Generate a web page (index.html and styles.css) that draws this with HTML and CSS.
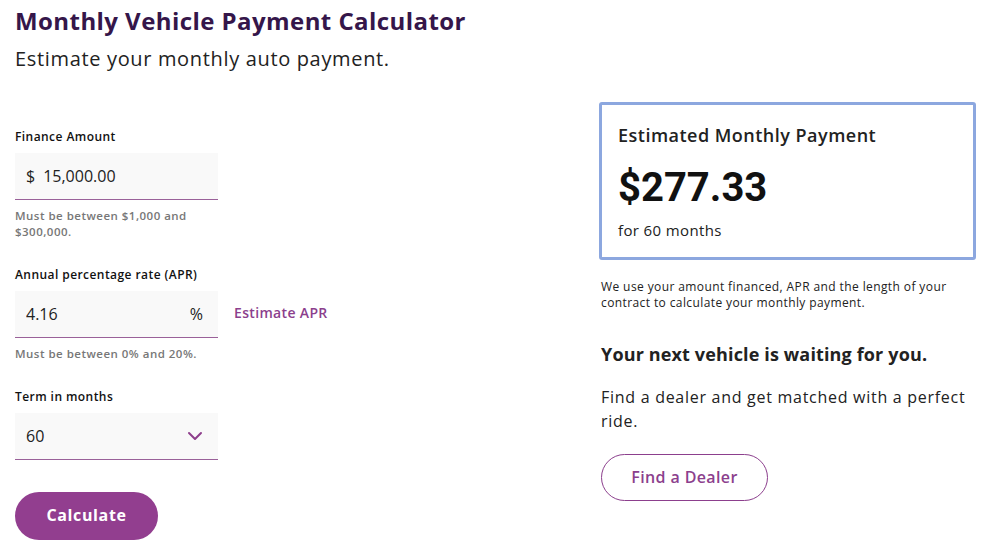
FILE: index.html
```html
<!DOCTYPE html>
<html lang="en">

<head>
    <meta charset="UTF-8">
    <meta name="viewport" content="width=device-width, initial-scale=1.0">
    <title>Monthly Vehicle Payment Calculator</title>
    <link rel="stylesheet" href="styles.css">
</head>

<body>
    <header class="intro">
        <h1 class="title">Monthly Vehicle Payment Calculator</h1>
        <p class="subtitle">Estimate your monthly auto payment.</p>
    </header>

    <div class="columns">
        <form class="calc-form">
            <div class="field">
                <label class="field-label" for="amount">Finance Amount</label>
                <div class="box">
                    <span class="prefix">$</span>
                    <input class="box-input" id="amount" type="text" value="15,000.00">
                </div>
                <p class="hint">Must be between $1,000 and $300,000.</p>
            </div>

            <div class="field">
                <label class="field-label" for="apr">Annual percentage rate (APR)</label>
                <div class="field-row">
                    <div class="box">
                        <input class="box-input" id="apr" type="text" value="4.16">
                        <span class="suffix">%</span>
                    </div>
                    <a class="link" href="#">Estimate APR</a>
                </div>
                <p class="hint">Must be between 0% and 20%.</p>
            </div>

            <div class="field">
                <label class="field-label" for="term">Term in months</label>
                <div class="box">
                    <span class="box-value" id="term">60</span>
                    <svg class="chevron" width="16" height="10" viewBox="0 0 16 10">
                        <path d="M2 2 L8 8 L14 2" fill="none" stroke="#8e3f8c" stroke-width="2" stroke-linecap="round" stroke-linejoin="round" />
                    </svg>
                </div>
            </div>

            <button class="btn-primary" type="button">Calculate</button>
        </form>

        <aside class="result">
            <div class="result-card">
                <h2 class="result-title">Estimated Monthly Payment</h2>
                <div class="result-amount">$277.33</div>
                <div class="result-term">for 60 months</div>
            </div>
            <p class="result-note">We use your amount financed, APR and the length of your contract to calculate your monthly payment.</p>

            <h3 class="promo-title">Your next vehicle is waiting for you.</h3>
            <p class="promo-text">Find a dealer and get matched with a perfect ride.</p>
            <button class="btn-outline" type="button">Find a Dealer</button>
        </aside>
    </div>
</body>

</html>
```

FILE: styles.css
```css
body {
    margin: 0;
    padding: 0 18px 0 15px;
    font-family: 'Open Sans', sans-serif;
    color: #222;
    background: #fff;
}

.intro {
    padding-top: 5px;
}

.title {
    margin: 0;
    font-size: 24px;
    line-height: 32px;
    font-weight: 700;
    letter-spacing: 0.018em;
    color: #35164a;
}

.subtitle {
    margin: 8px 0 0;
    font-size: 20px;
    line-height: 28px;
    letter-spacing: 0.033em;
    color: #222;
}

.columns {
    display: grid;
    grid-template-columns: 584px 377px;
    margin-top: 29px;
}

.calc-form {
    padding-top: 27px;
}

.field {
    margin-bottom: 27px;
}

.field-label {
    display: block;
    font-size: 12px;
    line-height: 16px;
    font-weight: 600;
    letter-spacing: 0.036em;
    color: #111;
    margin-bottom: 8px;
}

.field-row {
    display: flex;
    align-items: center;
    gap: 16px;
}

.box {
    display: flex;
    align-items: center;
    width: 203px;
    height: 47px;
    padding: 0 15px 0 11px;
    box-sizing: border-box;
    background: #f9f9f9;
    border-bottom: 1px solid #9a6199;
}

.prefix {
    font-size: 16px;
    margin-right: 8px;
}

.box-input,
.box-value {
    flex: 1;
    min-width: 0;
    border: none;
    background: transparent;
    font-family: inherit;
    font-size: 16px;
    color: #222;
    padding: 0;
    outline: none;
}

.suffix {
    font-size: 16px;
}

.chevron {
    flex: none;
}

.link {
    margin-top: -5px;
    font-size: 14px;
    font-weight: 600;
    letter-spacing: 0.024em;
    color: #8c3f8d;
    text-decoration: none;
}

.hint {
    margin: 8px 0 0;
    width: 203px;
    font-size: 11.5px;
    line-height: 16px;
    font-weight: 600;
    letter-spacing: 0.042em;
    color: #777;
}

.btn-primary {
    margin-top: 5px;
    width: 143px;
    height: 48px;
    padding-bottom: 4px;
    border: none;
    border-radius: 24px;
    background: #923e8f;
    color: #fff;
    font-family: inherit;
    font-size: 16px;
    font-weight: 700;
    letter-spacing: 0.04em;
    cursor: pointer;
}

.result-card {
    border: 3px solid #8ca7df;
    border-radius: 3px;
    padding: 18px 16px 16px;
}

.result-title {
    margin: 0;
    font-size: 18px;
    line-height: 24px;
    font-weight: 600;
    letter-spacing: 0.027em;
}

.result-amount {
    margin-top: 17px;
    font-family: Roboto, sans-serif;
    font-size: 40px;
    line-height: 48px;
    font-weight: 700;
    color: #111;
}

.result-term {
    margin-top: 7px;
    font-size: 15px;
    line-height: 22px;
    letter-spacing: 0.025em;
}

.result-note {
    margin: 19px 0 0;
    padding-left: 2px;
    font-size: 12px;
    line-height: 16px;
    letter-spacing: 0.033em;
}

.promo-title {
    margin: 31px 0 0;
    padding-left: 2px;
    font-size: 18px;
    line-height: 24px;
    font-weight: 700;
    letter-spacing: 0.008em;
}

.promo-text {
    margin: 19px 0 0;
    padding-left: 2px;
    font-size: 16px;
    line-height: 24px;
    letter-spacing: 0.045em;
}

.btn-outline {
    margin: 21px 0 0 2px;
    width: 167px;
    height: 47px;
    padding-bottom: 3px;
    border: 1px solid #8c3f8d;
    border-radius: 24px;
    background: #fff;
    color: #8c3f8d;
    font-family: inherit;
    font-size: 16px;
    font-weight: 600;
    letter-spacing: 0.024em;
    cursor: pointer;
}
```
